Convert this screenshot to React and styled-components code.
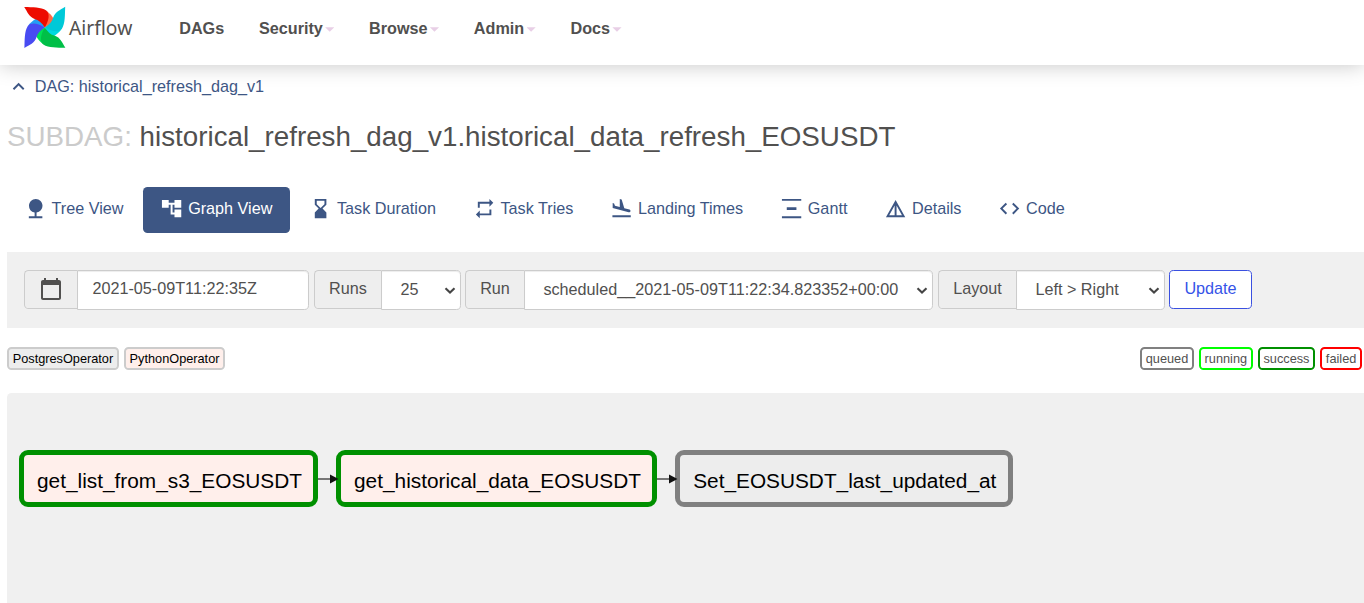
import React from "react";
import styled, { createGlobalStyle } from "styled-components";
import {
  MdAccountTree,
  MdCode,
  MdExpandLess,
  MdFlightLand,
  MdHourglassBottom,
  MdNature,
  MdRepeat,
} from "react-icons/md";

const GlobalStyle = createGlobalStyle`
  * { box-sizing: border-box; }
  body {
    margin: 0;
    background: #fff;
    color: #51504f;
    font-family: "Liberation Sans", Arial, sans-serif;
    font-size: 16.19px;
    line-height: 23px;
    overflow: hidden;
  }
`;

const Page = styled.div`
  height: 603px;
  display: flex;
  flex-direction: column;
  overflow: hidden;
`;

const Header = styled.header`
  flex: none;
  height: 65px;
  display: flex;
  align-items: flex-start;
  padding-left: 23px;
  background: #fff;
  box-shadow: 0 0 20px rgba(0, 0, 0, 0.23);
`;

const Brand = styled.a`
  display: flex;
  width: 138.8px;
  padding-top: 6px;
`;

const BrandName = styled.span`
  font-family: "Noto Sans", sans-serif;
  font-size: 19.3px;
  line-height: 26px;
  margin: 9px 0 0 2px;
`;

const Nav = styled.nav`
  display: flex;
`;

const NavItem = styled.a`
  display: flex;
  align-items: center;
  padding: 17px 17.4px;
  font-weight: 700;
`;

const Caret = styled.i`
  width: 9.2px;
  height: 4.6px;
  margin: 2px 0 0 2.3px;
  background: #e8cfe6;
  clip-path: polygon(0 0, 100% 0, 50% 100%);
`;

const Main = styled.main`
  flex: 1;
  display: flex;
  flex-direction: column;
  padding-left: 7px;
`;

const ParentLink = styled.a`
  display: flex;
  align-items: center;
  height: 23px;
  margin-top: 10px;
  color: #3d5684;
  svg { margin-right: 4.5px; }
`;

const Title = styled.h3`
  margin: 24px 0 0;
  height: 30px;
  line-height: 30px;
  font-size: 27.75px;
  font-weight: 400;
`;

const Muted = styled.span`
  color: #cbcbcb;
`;

const Tabs = styled.nav`
  display: flex;
  gap: 2.1px;
  margin: 35px 0 0 -0.5px;
`;

const Tab = styled.a`
  display: flex;
  align-items: center;
  height: 46px;
  padding: 0 17.4px 3px;
  border-radius: 4.6px;
  white-space: nowrap;
  color: ${(p) => (p.$active ? "#fff" : "#3d5684")};
  background: ${(p) => (p.$active ? "#3d5684" : "transparent")};
  svg { flex: none; margin-right: 4.5px; }
`;

const Toolbar = styled.form`
  display: flex;
  align-items: flex-start;
  height: 76px;
  margin-top: 19px;
  padding: 18px 17px;
  background: #f0f0f0;
`;

const Group = styled.div`
  display: flex;
  width: ${(p) => p.$width}px;
  margin-right: ${(p) => p.$gap}px;
`;

const Addon = styled.div`
  display: flex;
  align-items: center;
  justify-content: center;
  width: ${(p) => p.$width}px;
  height: 39px;
  padding-bottom: 2px;
  background: #eee;
  border: 1px solid #ccc;
  border-right: 0;
  border-radius: 4.6px 0 0 4.6px;
`;

const Field = styled.div`
  flex: 1;
  display: flex;
  align-items: center;
  justify-content: space-between;
  height: 40px;
  padding: ${(p) => (p.$select ? "0 4px 1px 18.4px" : "0 14.4px 3px")};
  background: #fff;
  border: 1px solid #ccc;
  border-radius: 0 4.6px 4.6px 0;
  box-shadow: inset 0 1px 1px rgba(0, 0, 0, 0.075);
  white-space: nowrap;
`;

const UpdateButton = styled.button`
  width: 83px;
  height: 39px;
  padding: 0 0 2px;
  font: inherit;
  color: #3553e8;
  background: #fff;
  border: 1px solid #3a50e0;
  border-radius: 4.6px;
`;

const Legend = styled.div`
  display: flex;
  gap: 5px;
  height: 23px;
  margin: 19px 2px 0 0;
`;

const LegendItem = styled.span`
  height: 23px;
  padding: 0 3.7px;
  font-size: 12.74px;
  line-height: 19px;
  white-space: nowrap;
  color: ${(p) => (p.$operator ? "#000" : "#51504f")};
  background: ${(p) => p.$fill || "#fff"};
  border: 2px solid ${(p) => p.$border};
  border-radius: 4.6px;
`;

const Spacer = styled.span`
  flex: 1;
`;

const Canvas = styled.section`
  flex: 1;
  display: flex;
  align-items: flex-start;
  margin-top: 23px;
  padding: 57px 0 0 12px;
  background: #f0f0f0;
  border-radius: 4.6px 0 0 0;
`;

const Node = styled.div`
  width: ${(p) => p.$width}px;
  height: 57px;
  padding: 4px 0 0 2px;
  display: flex;
  align-items: center;
  justify-content: center;
  border: 5px solid ${(p) => p.$border};
  border-radius: 9px;
  background: ${(p) => p.$fill};
  color: #000;
  font-size: 20.82px;
  white-space: nowrap;
`;

const Edge = styled.svg`
  flex: none;
  position: relative;
  overflow: visible;
  margin-top: 24px;
`;

const ICON = 23.2;

const Glyph = ({ d, size = ICON }) => (
  <svg width={size} height={size} viewBox="0 0 24 24" fill="currentColor">
    <path d={d} />
  </svg>
);

// Pinwheel: four identical blades a quarter turn apart, each with a lighter fold behind it.
const blades = [
  { turn: 0, fill: "#ed0b00", fold: "#ff6a45" },
  { turn: 90, fill: "#00c9d8", fold: "#00d9e0" },
  { turn: 180, fill: "#00bf47", fold: "#00df55" },
  { turn: 270, fill: "#484bf2", fold: "#259ef4" },
];

const Logo = () => (
  <svg width="44" height="44" viewBox="0 0 44 44">
    <g transform="translate(21.8 21.4)">
      {blades.map((b) => (
        <path
          key={b.turn}
          transform={`rotate(${b.turn})`}
          fill={b.fold}
          d="M2 -16.5C5 -14 7.5 -11.5 9 -8.2L5 -2L0 0Z"
        />
      ))}
      {blades.map((b) => (
        <path
          key={b.turn}
          transform={`rotate(${b.turn})`}
          fill={b.fill}
          d="M-20.6 -20.4C-12 -20 -4 -20.5 1.5 -17C5.5 -13.5 4 -7 0 0C-3 -4.5 -6 -7.5 -9.5 -8.2C-16 -10.5 -17 -15 -20.6 -20.4Z"
        />
      ))}
    </g>
  </svg>
);

const Chevron = () => (
  <svg width="12" height="8" viewBox="0 0 12 8" fill="none">
    <path d="M1.5 2.2 L6 6.5 L10.5 2.2" stroke="#454545" strokeWidth="2.1" />
  </svg>
);

const Arrow = () => (
  <Edge width="18" height="10" viewBox="0 0 18 10">
    <path d="M0 5H12" stroke="#333" strokeWidth="1.3" />
    <path d="M12 .5L20.5 5L12 9.5Z" fill="#111" />
  </Edge>
);

const tabs = [
  { label: "Tree View", icon: <MdNature size={ICON} /> },
  { label: "Graph View", icon: <MdAccountTree size={ICON} />, active: true },
  { label: "Task Duration", icon: <MdHourglassBottom size={ICON} /> },
  { label: "Task Tries", icon: <MdRepeat size={ICON} /> },
  { label: "Landing Times", icon: <MdFlightLand size={ICON} /> },
  { label: "Gantt", icon: <Glyph d="M22 2v2H2V2h20zM7 10.5v3h10v-3H7zM2 20v2h20v-2H2z" /> },
  { label: "Details", icon: <Glyph d="M12 3L2 21h20L12 3zm1 5.92L18.6 19H13V8.92zm-2 0V19H5.4L11 8.92z" /> },
  { label: "Code", icon: <MdCode size={ICON} /> },
];

const states = [
  ["queued", "#808080"],
  ["running", "#00ff00"],
  ["success", "#009000"],
  ["failed", "#ff0000"],
];

export default function App() {
  return (
    <Page>
      <GlobalStyle />
      <Header>
        <Brand>
          <Logo />
          <BrandName>Airflow</BrandName>
        </Brand>
        <Nav>
          <NavItem>DAGs</NavItem>
          {["Security", "Browse", "Admin", "Docs"].map((name) => (
            <NavItem key={name}>{name}<Caret /></NavItem>
          ))}
        </Nav>
      </Header>
      <Main>
        <ParentLink>
          <MdExpandLess size={ICON} />
          DAG: historical_refresh_dag_v1
        </ParentLink>
        <Title>
          <Muted>SUBDAG:</Muted> historical_refresh_dag_v1.historical_data_refresh_EOSUSDT
        </Title>
        <Tabs>
          {tabs.map((t) => (
            <Tab key={t.label} $active={t.active}>{t.icon}{t.label}</Tab>
          ))}
        </Tabs>
        <Toolbar>
          <Group $width={285} $gap={5}>
            <Addon $width={53}>
              <Glyph
                size={24}
                d="M20 3h-1V1h-2v2H7V1H5v2H4c-1.1 0-2 .9-2 2v16c0 1.1.9 2 2 2h16c1.1 0 2-.9 2-2V5c0-1.1-.9-2-2-2zm0 18H4V8h16v13z"
              />
            </Addon>
            <Field>2021-05-09T11:22:35Z</Field>
          </Group>
          <Group $width={147} $gap={4}>
            <Addon $width={67}>Runs</Addon>
            <Field $select>25<Chevron /></Field>
          </Group>
          <Group $width={468} $gap={5}>
            <Addon $width={59}>Run</Addon>
            <Field $select>scheduled__2021-05-09T11:22:34.823352+00:00<Chevron /></Field>
          </Group>
          <Group $width={227} $gap={4}>
            <Addon $width={78}>Layout</Addon>
            <Field $select>Left &gt; Right<Chevron /></Field>
          </Group>
          <UpdateButton type="button">Update</UpdateButton>
        </Toolbar>
        <Legend>
          <LegendItem $operator $border="#ccc" $fill="#ededed">PostgresOperator</LegendItem>
          <LegendItem $operator $border="#ccc" $fill="#ffefeb">PythonOperator</LegendItem>
          <Spacer />
          {states.map(([name, color]) => (
            <LegendItem key={name} $border={color}>{name}</LegendItem>
          ))}
        </Legend>
        <Canvas>
          <Node $width={299} $border="#009000" $fill="#ffefeb">get_list_from_s3_EOSUSDT</Node>
          <Arrow />
          <Node $width={321} $border="#009000" $fill="#ffefeb">get_historical_data_EOSUSDT</Node>
          <Arrow />
          <Node $width={337.5} $border="#808080" $fill="#ededed">Set_EOSUSDT_last_updated_at</Node>
        </Canvas>
      </Main>
    </Page>
  );
}
